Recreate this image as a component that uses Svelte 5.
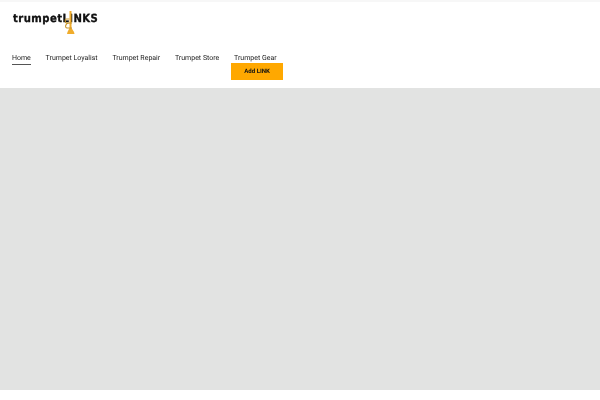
<script>
    const links = ['Home', 'Trumpet Loyalist', 'Trumpet Repair', 'Trumpet Store', 'Trumpet Gear'];
</script>

<div class="topline"></div>
<header class="header">
    <a class="logo" href="#top">
        <span class="logo-text">trumpetLINKS</span>
        <svg class="horn" viewBox="0 0 14 24" width="14" height="24" aria-hidden="true">
            <path d="M5.5 0 L7.5 0 L7.5 17 L10 21 L10.5 23 L3 23 L3.5 21 L5.5 17 Z" fill="#f0ac2c" />
            <path d="M5.5 8 L2.5 8 C0.8 8 0.8 12 2.5 12 L8 12 M5.5 12 C0.8 12 0.8 17 3 17 L8 17" fill="none" stroke="#c8962c" stroke-width="1.1" />
        </svg>
    </a>
    <nav class="nav">
        {#each links as link, i}
            <div class="nav-item">
                <a href="#top" class:active={i === 0}>{link}</a>
                {#if link === 'Trumpet Gear'}
                    <a class="add-btn" href="#top">Add LINK</a>
                {/if}
            </div>
        {/each}
    </nav>
</header>
<main class="hero"></main>

<style>
    :global(body) {
        margin: 0;
        background: #fff;
        font-family: Roboto, "Liberation Sans", sans-serif;
        text-rendering: geometricPrecision;
    }

    a {
        text-decoration: none;
        color: #222;
    }

    .topline {
        height: 2px;
        background: #f7f7f7;
    }

    .header {
        height: 86px;
        padding: 0 12px;
        box-sizing: border-box;
    }

    .logo {
        display: block;
        position: relative;
        width: 90px;
        padding: 5px 0 0 1px;
        height: 46px;
        will-change: opacity;
    }

    .logo-text {
        font-family: "DejaVu Sans", sans-serif;
        font-stretch: condensed;
        font-weight: 700;
        font-size: 11.2px;
        color: #111;
        letter-spacing: 0.45px;
        -webkit-text-stroke: 0.3px #111;
    }

    .horn {
        position: absolute;
        left: 52px;
        top: 9px;
    }

    .nav {
        display: flex;
        gap: 14.75px;
        will-change: opacity;
    }

    .nav-item {
        position: relative;
        font-size: 7px;
        line-height: 11px;
    }

    .active {
        display: inline-block;
        border-bottom: 1px solid #555;
    }

    .add-btn {
        position: absolute;
        top: 10px;
        left: -3px;
        width: 52px;
        height: 17px;
        line-height: 17px;
        text-align: center;
        background: #ffa800;
        color: #111;
        font-size: 6.1px;
        font-weight: 700;
    }

    .hero {
        height: 302px;
        background: #e2e3e2;
    }
</style>
